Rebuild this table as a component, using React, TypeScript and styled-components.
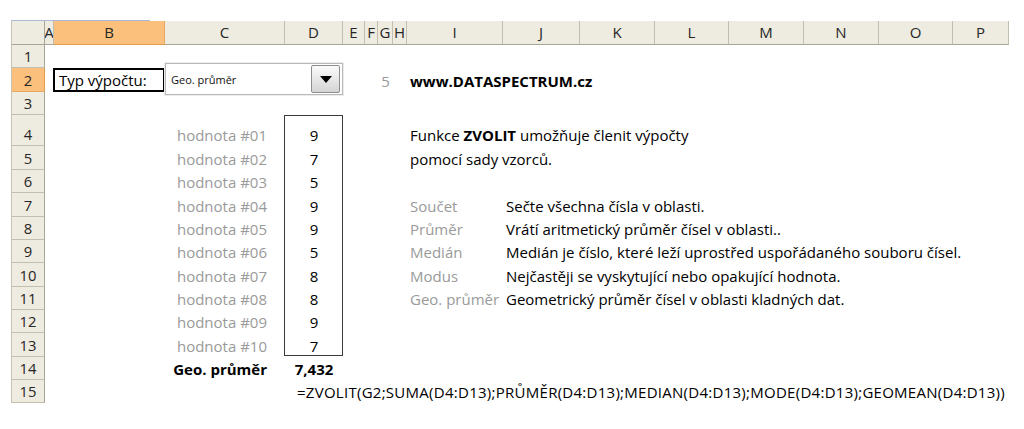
import React from 'react'
import styled, { createGlobalStyle } from 'styled-components'

const GlobalStyle = createGlobalStyle`
  html, body {
    margin: 0;
    padding: 0;
    background: #ffffff;
  }
  body {
    font-family: 'Open Sans', 'Noto Sans', sans-serif;
  }
`

const COLS = ['A', 'B', 'C', 'D', 'E', 'F', 'G', 'H', 'I', 'J', 'K', 'L', 'M', 'N', 'O', 'P']
const COL_WIDTHS = [34, 9, 111, 120, 58, 22, 13, 15, 14, 96, 77, 75, 74, 75, 75, 74, 56]
const ROW_HEIGHTS = [24, 23, 24, 23, 31, 24, 23, 24, 23, 23, 24, 23, 23, 24, 23, 23]

// column letter -> grid column index (row header is column 1)
const col = (letter: string) => COLS.indexOf(letter) + 2

const values = [9, 7, 5, 9, 9, 5, 8, 8, 9, 7]

const functions = [
  ['Součet', 'Sečte všechna čísla v oblasti.'],
  ['Průměr', 'Vrátí aritmetický průměr čísel v oblasti..'],
  ['Medián', 'Medián je číslo, které leží uprostřed uspořádaného souboru čísel.'],
  ['Modus', 'Nejčastěji se vyskytující nebo opakující hodnota.'],
  ['Geo. průměr', 'Geometrický průměr čísel v oblasti kladných dat.'],
]

const Page = styled.div`
  padding: 20px 0 0 11px;
`

const TabEdge = styled.div`
  width: 139px;
  height: 1px;
  background: #a9b9d6;
`

const Sheet = styled.div`
  position: relative;
  display: grid;
  grid-template-columns: ${COL_WIDTHS.map((w) => `${w}px`).join(' ')};
  grid-template-rows: ${ROW_HEIGHTS.map((h) => `${h}px`).join(' ')};
  width: max-content;
  font-size: 15px;
  color: #000;
`

const Corner = styled.div`
  grid-column: 1;
  grid-row: 1;
  background: #eeebe0;
  border-left: 1px solid #c8c3b3;
  border-right: 1px solid #a9a597;
  border-bottom: 1px solid #a9a597;
`

const ColHead = styled.div<{ $col: number; $active?: boolean }>`
  grid-column: ${(p) => p.$col};
  grid-row: 1;
  display: flex;
  align-items: center;
  justify-content: center;
  overflow: hidden;
  background: ${(p) => (p.$active ? '#fbc07c' : '#eeebe0')};
  border-right: 1px solid ${(p) => (p.$active ? '#e7a760' : '#c3bfae')};
  border-bottom: 1px solid ${(p) => (p.$active ? '#e29a4d' : '#a9a597')};
  color: #262626;
  font-size: 15px;
  line-height: 1;
`

const RowHead = styled.div<{ $row: number; $active?: boolean }>`
  grid-column: 1;
  grid-row: ${(p) => p.$row};
  display: flex;
  align-items: flex-end;
  justify-content: center;
  padding-bottom: 2px;
  box-sizing: border-box;
  background: ${(p) => (p.$active ? '#fbc07c' : '#eeebe0')};
  border-left: 1px solid #c8c3b3;
  border-right: 1px solid ${(p) => (p.$active ? '#e29a4d' : '#a9a597')};
  border-bottom: 1px solid ${(p) => (p.$active ? '#e7a760' : '#c3bfae')};
  color: #262626;
  font-size: 14.8px;
  line-height: 18px;
`

type CellProps = {
  $col: number
  $row: number
  $span?: number
  $align?: 'left' | 'center' | 'right'
  $muted?: boolean
  $bold?: boolean
  $indent?: number
  $spread?: boolean
}

const Cell = styled.div<CellProps>`
  grid-column: ${(p) => `${p.$col} / span ${p.$span ?? 1}`};
  grid-row: ${(p) => p.$row};
  z-index: 1;
  display: flex;
  align-items: flex-end;
  justify-content: ${(p) =>
    p.$align === 'right' ? 'flex-end' : p.$align === 'center' ? 'center' : 'flex-start'};
  padding: 0 ${(p) => (p.$align === 'right' ? p.$indent ?? 3 : 0)}px 1px
    ${(p) => (p.$align === 'left' || !p.$align ? p.$indent ?? 3 : 0)}px;
  white-space: nowrap;
  line-height: 20px;
  letter-spacing: ${(p) => (p.$spread ? '0.27px' : 'normal')};
  color: ${(p) => (p.$muted ? '#9a9a9a' : '#000')};
  font-weight: ${(p) => (p.$bold ? 700 : 400)};
`

const LabelBox = styled.div`
  grid-column: ${col('B')};
  grid-row: 3;
  margin-left: -1px;
  z-index: 1;
  display: flex;
  align-items: center;
  padding-left: 4px;
  border: 2px solid #000;
  white-space: nowrap;
  line-height: 20px;
`

const RangeBox = styled.div`
  grid-column: ${col('D')};
  grid-row: 5 / 15;
  margin: 0 0 1px -1px;
  border: 1px solid #3a3a3a;
`

const Combo = styled.div`
  position: absolute;
  left: 154px;
  top: 42px;
  z-index: 2;
  width: 178px;
  height: 32px;
  box-sizing: border-box;
  display: flex;
  align-items: center;
  padding: 0 2px 0 5px;
  background: #fff;
  border: 1px solid #b9b9b9;
  box-shadow: 0 0 0 1px #ececec;
`

const ComboText = styled.span`
  flex: 1;
  font-size: 11px;
  color: #111;
`

const ComboButton = styled.div`
  width: 29px;
  height: 28px;
  box-sizing: border-box;
  display: flex;
  align-items: center;
  justify-content: center;
  border: 1px solid #8e8e8e;
  border-radius: 2px;
  background: linear-gradient(#fbfbfb, #e6e6e6 55%, #d4d4d4);
`

const Caret = styled.span`
  width: 0;
  height: 0;
  border-left: 6px solid transparent;
  border-right: 6px solid transparent;
  border-top: 7px solid #000;
`

export default function App() {
  return (
    <>
      <GlobalStyle />
      <Page>
        <TabEdge />
        <Sheet>
          <Corner />
          {COLS.map((c) => (
            <ColHead key={c} $col={col(c)} $active={c === 'B'}>
              {c}
            </ColHead>
          ))}
          {Array.from({ length: 15 }, (_, i) => (
            <RowHead key={i} $row={i + 2} $active={i === 1}>
              {i + 1}
            </RowHead>
          ))}

          <LabelBox>Typ výpočtu:</LabelBox>
          <Cell $col={col('G')} $row={3} $align="center" $muted>
            5
          </Cell>
          <Cell $col={col('I')} $row={3} $span={4} $bold>
            www.DATASPECTRUM.cz
          </Cell>

          <RangeBox />
          {values.map((v, i) => (
            <React.Fragment key={i}>
              <Cell $col={col('C')} $row={i + 5} $align="right" $indent={18} $muted>
                hodnota #{String(i + 1).padStart(2, '0')}
              </Cell>
              <Cell $col={col('D')} $row={i + 5} $align="center">
                {v}
              </Cell>
            </React.Fragment>
          ))}
          <Cell $col={col('C')} $row={15} $align="right" $indent={18} $bold>
            Geo. průměr
          </Cell>
          <Cell $col={col('D')} $row={15} $align="center" $bold>
            7,432
          </Cell>
          <Cell $col={col('D')} $row={16} $span={13} $indent={12} $spread>
            =ZVOLIT(G2;SUMA(D4:D13);PRŮMĚR(D4:D13);MEDIAN(D4:D13);MODE(D4:D13);GEOMEAN(D4:D13))
          </Cell>

          <Cell $col={col('I')} $row={5} $span={5}>
            <span>
              Funkce <b>ZVOLIT</b> umožňuje členit výpočty
            </span>
          </Cell>
          <Cell $col={col('I')} $row={6} $span={3}>
            pomocí sady vzorců.
          </Cell>
          {functions.map(([name, desc], i) => (
            <React.Fragment key={name}>
              <Cell $col={col('I')} $row={i + 8} $muted>
                {name}
              </Cell>
              <Cell $col={col('J')} $row={i + 8} $span={7}>
                {desc}
              </Cell>
            </React.Fragment>
          ))}

          <Combo>
            <ComboText>Geo. průměr</ComboText>
            <ComboButton>
              <Caret />
            </ComboButton>
          </Combo>
        </Sheet>
      </Page>
    </>
  )
}
